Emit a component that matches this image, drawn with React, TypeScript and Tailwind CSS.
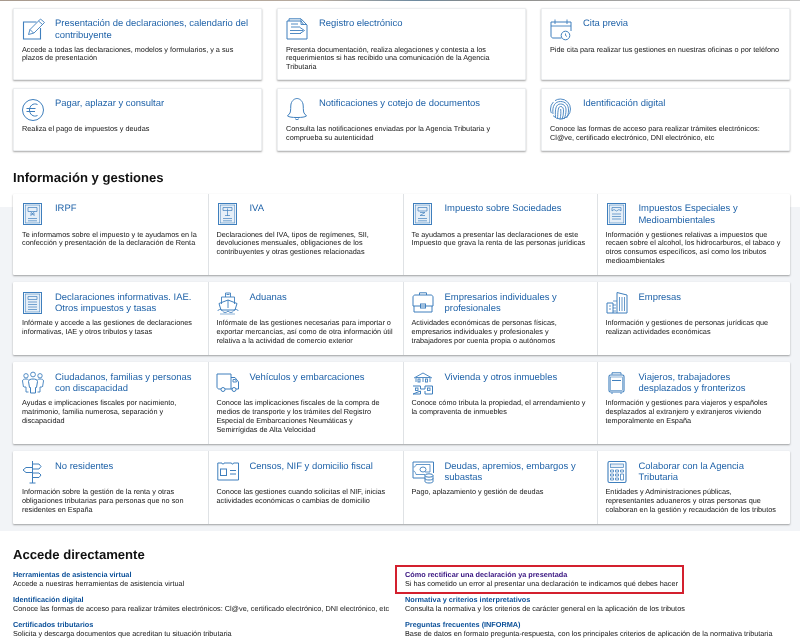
import React from "react";

const S = ({ children }: { children: React.ReactNode }) => (
  <svg width="24" height="24" viewBox="0 0 24 24" fill="none" stroke="#3f7fbd" strokeWidth="0.9" className="overflow-visible">
    {children}
  </svg>
);

const Form = ({ top }: { top: React.ReactNode }) => (
  <S>
    <rect x="1.5" y="0.5" width="18" height="21" strokeWidth="1" />
    <rect x="3.2" y="2" width="14.6" height="18" fill="#e6eff8" strokeWidth="0.6" />
    {top}
  </S>
);

const icons: Record<string, React.ReactNode> = {
  edit: (
    <S>
      <path d="M14.5 4H1.5V21H18.5V10" strokeWidth="1.1" />
      <path d="M6.5 16.5L8 11.5L18.5 1L22.5 4.5L12 15Z" />
      <path d="M16.5 3L20.5 6.5M8 11.5L11.5 15" />
    </S>
  ),
  docs: (
    <S>
      <path d="M3 3V0.8H15L21 7V21H1V3H15L18 7" strokeWidth="1" />
      <path d="M15 1V6.5H21" />
      <path d="M5 6H12M5 9H14M4 12.5H17M14 9.5L18.5 12.5L14 15.5M4 15.5H15M14.5 12.5" />
    </S>
  ),
  cal: (
    <S>
      <path d="M11.5 20H3C2 20 1 19 1 18V4H21V13" strokeWidth="1" />
      <path d="M1 8H21M5 1.5V6M17 1.5V6" />
      <circle cx="15.5" cy="17.5" r="4.3" strokeWidth="1" />
      <path d="M15.5 15.5V17.5L17 18.5" />
    </S>
  ),
  euro: (
    <S>
      <circle cx="11" cy="12" r="10.5" strokeWidth="1" />
      <path d="M15.5 6.5C11 4.5 7.5 8 7.5 12C7.5 16 11 19.5 15.5 17.5M4.5 10.5H13.5M4.5 13.5H13" strokeWidth="1" />
    </S>
  ),
  bell: (
    <S>
      <path d="M4 15C5 13 4.5 8 5 6C6 2 9 0.5 11 0.5C13 0.5 16 2 17 6C17.5 8 17 13 18 15L20.5 18C19 19 16 19.5 11 19.5C6 19.5 3 19 1.5 18Z" strokeWidth="1" />
      <path d="M9 20.5C10 22 12 22 13 20.5" />
    </S>
  ),
  finger: (
    <S>
      <circle cx="10.5" cy="11" r="10" strokeDasharray="24 3 12 2" />
      <path d="M3 16C2 8 5 3.5 10.5 3.5C15.5 3.5 18.5 7 18.5 12C18.5 15 18 18 16.5 20" />
      <path d="M5.5 19C5 12 5.5 6 10.5 6C14.5 6 16 9 16 12C16 15 15.5 18 14 21" />
      <path d="M7.5 20.5C8 16 7.5 8.5 10.5 8.5C13 8.5 13.5 10.5 13.5 13C13.5 16 13 19 12 21.5" />
      <path d="M10 21.5C11 17 11 14 10.7 11" />
    </S>
  ),
  irpf: <Form top={<path d="M6 4.5H15V8.5H6ZM8.5 8.5L12.5 13M12.5 8.5L8.5 13M8 11H13M6 15.5H15M6 17.8H15" strokeWidth="0.7" />} />,
  iva: <Form top={<path d="M6 4.5H15V7.5H6ZM10.5 5.5V13M8 12.5H13M6 15.5H15M6 17.8H15" strokeWidth="0.7" />} />,
  soc: <Form top={<path d="M6 4.5H15V8H6ZM8 9.5H13L8 12.5H13M6 15.5H15M6 17.8H15" strokeWidth="0.7" />} />,
  esp: <Form top={<path d="M6 4.5H15V8L13 6.5L10.5 8L8 6.5L6 8ZM6 11H15M6 13.5H15M6 16H15" strokeWidth="0.7" />} />,
  inf: <Form top={<path d="M6 4.5H15V7.5H6ZM6 10H15M6 12.5H15M6 15H15M6 17.5H15" strokeWidth="0.7" />} />,
  ship: (
    <S>
      <path d="M8.5 5V1H13.5V5M4.5 12V5H17.5V12" />
      <path d="M2 11.5L11 8L20 11.5L18 18H4Z" strokeWidth="1" />
      <path d="M11 8V16M9.5 2.5H12.5" />
      <path d="M0.5 19C2 17 4 17 5.5 19C7 21 9 21 11 19C13 21 15 21 16.5 19C18 17 20 17 21.5 19" />
      <path d="M3 22H18" strokeWidth="0.6" />
    </S>
  ),
  case: (
    <S>
      <path d="M7.5 3V0.8H14.5V3" strokeWidth="1" />
      <path d="M1 5C1 4 2 3 3 3H19C20 3 21 4 21 5V14H1Z" strokeWidth="1" />
      <path d="M2 14V20H20V14" strokeWidth="1" />
      <rect x="8.5" y="12" width="5" height="4" strokeWidth="1" />
    </S>
  ),
  build: (
    <S>
      <path d="M1 21V11H7V21M1 21H21V3L11 0.5V21" strokeWidth="1" />
      <path d="M7 9H11M3 14H5M3 17H5M13.5 5V19M16 5V19M18.5 5V19M7 13H10M7 16H10M7 19H10" strokeWidth="0.8" />
    </S>
  ),
  people: (
    <S>
      <circle cx="11" cy="2.5" r="2.4" />
      <circle cx="4" cy="3.8" r="2.2" />
      <circle cx="18" cy="3.8" r="2.2" />
      <path d="M1.5 15L0.5 9C0.5 7.5 2 7 4 7C5 7 6 7.2 6.5 7.8M20.5 15L21.5 9C21.5 7.5 20 7 18 7C17 7 16 7.2 15.5 7.8" />
      <path d="M6.5 9.5C6.5 7.5 9 7 11 7C13 7 15.5 7.5 15.5 9.5L14.5 15.5H13.5V21H8.5V15.5H7.5Z" strokeWidth="1" />
      <path d="M2 15H4V20H6.5M20 15H18V20H15.5" />
    </S>
  ),
  truck: (
    <S>
      <path d="M4 17H2C1 17 0 16 0 15V2H14V17H8M14 5.5H18L21.5 10V17H19M15.5 17H14" strokeWidth="1" />
      <path d="M16 7.5H18.5L19.5 10H16Z" />
      <circle cx="6" cy="17.5" r="2" strokeWidth="1" />
      <circle cx="17" cy="17.5" r="2" strokeWidth="1" />
    </S>
  ),
  house: (
    <S>
      <path d="M2 6L11 1L20 6M3.5 5.5H18.5M4 6V10M18 6V10M11 6V10" strokeWidth="0.9" />
      <rect x="6" y="7" width="2" height="3" />
      <rect x="13.5" y="7" width="2" height="3" />
      <path d="M1 14H8.5V17H13V14H20.5V22H13V19M8.5 19V22H1Z" strokeWidth="1" />
      <rect x="3.5" y="16" width="2.5" height="2.5" />
      <rect x="15.5" y="16" width="2.5" height="2.5" />
    </S>
  ),
  bag: (
    <S>
      <path d="M6 2.5V0.8H15V2.5" strokeWidth="1" />
      <rect x="3" y="3" width="15" height="17" rx="1.5" strokeWidth="1.1" />
      <rect x="4.5" y="5" width="12" height="13.5" strokeWidth="0.6" />
      <path d="M6 8.5H15M6 20.5V22M15 20.5V22" strokeWidth="1" />
    </S>
  ),
  sign: (
    <S>
      <path d="M10.5 0V22M7.5 22H13.5" strokeWidth="1" />
      <path d="M10.5 3H17L19 5.5L17 8H10.5M10.5 12H17L19 14L17 16.5H10.5M10.5 6.5H4L1 9L4 11.5H10.5" strokeWidth="1" />
    </S>
  ),
  cens: (
    <S>
      <path d="M0.8 2H5C5 3.5 7 3.5 7 2H14.5C14.5 3.5 16.5 3.5 16.5 2H21.5V19H0.8Z" strokeWidth="1" />
      <rect x="3.5" y="8" width="6" height="6.5" strokeWidth="1" />
      <path d="M13 9.5H19M13 13H19" strokeWidth="1" />
    </S>
  ),
  debt: (
    <S>
      <path d="M13 17H1V1H21.5V12" strokeWidth="1" />
      <path d="M4 3.5H18V11H13M4 3.5C4 5 3 6 1.5 6M1.5 10C3 10 3.5 12 4 13.5H13" strokeWidth="0.8" />
      <ellipse cx="11" cy="8.5" rx="3" ry="2.5" />
      <ellipse cx="17" cy="14.5" rx="4" ry="1.7" strokeWidth="1" />
      <path d="M13 14.5V20.5C13 22.5 21 22.5 21 20.5V14.5M13 17.5C13 19.5 21 19.5 21 17.5" strokeWidth="1" />
    </S>
  ),
  calc: (
    <S>
      <rect x="2" y="0.5" width="18" height="21" rx="1.5" strokeWidth="1.1" />
      <rect x="4.5" y="3" width="13" height="3.5" fill="#e6eff8" strokeWidth="0.7" />
      <path d="M4.5 9H7.5V11H4.5ZM9.5 9H12.5V11H9.5ZM14.5 9H17.5V11H14.5ZM4.5 13H7.5V15H4.5ZM9.5 13H12.5V15H9.5ZM14.5 13H17.5V19H14.5ZM4.5 17H7.5V19H4.5ZM9.5 17H12.5V19H9.5Z" strokeWidth="0.8" />
    </S>
  ),
};

type Item = { i: string; t: string; d: string };

const top: Item[] = [
  { i: "edit", t: "Presentación de declaraciones, calendario del contribuyente", d: "Accede a todas las declaraciones, modelos y formularios, y a sus plazos de presentación" },
  { i: "docs", t: "Registro electrónico", d: "Presenta documentación, realiza alegaciones y contesta a los requerimientos si has recibido una comunicación de la Agencia Tributaria" },
  { i: "cal", t: "Cita previa", d: "Pide cita para realizar tus gestiones en nuestras oficinas o por teléfono" },
  { i: "euro", t: "Pagar, aplazar y consultar", d: "Realiza el pago de impuestos y deudas" },
  { i: "bell", t: "Notificaciones y cotejo de documentos", d: "Consulta las notificaciones enviadas por la Agencia Tributaria y comprueba su autenticidad" },
  { i: "finger", t: "Identificación digital", d: "Conoce las formas de acceso para realizar trámites electrónicos: Cl@ve, certificado electrónico, DNI electrónico, etc" },
];

const rows: Item[][] = [
  [
    { i: "irpf", t: "IRPF", d: "Te informamos sobre el impuesto y te ayudamos en la confección y presentación de la declaración de Renta" },
    { i: "iva", t: "IVA", d: "Declaraciones del IVA, tipos de regímenes, SII, devoluciones mensuales, obligaciones de los contribuyentes y otras gestiones relacionadas" },
    { i: "soc", t: "Impuesto sobre Sociedades", d: "Te ayudamos a presentar las declaraciones de este Impuesto que grava la renta de las personas jurídicas" },
    { i: "esp", t: "Impuestos Especiales y Medioambientales", d: "Información y gestiones relativas a impuestos que recaen sobre el alcohol, los hidrocarburos, el tabaco y otros consumos específicos, así como los tributos medioambientales" },
  ],
  [
    { i: "inf", t: "Declaraciones informativas. IAE. Otros impuestos y tasas", d: "Infórmate y accede a las gestiones de declaraciones informativas, IAE y otros tributos y tasas" },
    { i: "ship", t: "Aduanas", d: "Infórmate de las gestiones necesarias para importar o exportar mercancías, así como de otra información útil relativa a la actividad de comercio exterior" },
    { i: "case", t: "Empresarios individuales y profesionales", d: "Actividades económicas de personas físicas, empresarios individuales y profesionales y trabajadores por cuenta propia o autónomos" },
    { i: "build", t: "Empresas", d: "Información y gestiones de personas jurídicas que realizan actividades económicas" },
  ],
  [
    { i: "people", t: "Ciudadanos, familias y personas con discapacidad", d: "Ayudas e implicaciones fiscales por nacimiento, matrimonio, familia numerosa, separación y discapacidad" },
    { i: "truck", t: "Vehículos y embarcaciones", d: "Conoce las implicaciones fiscales de la compra de medios de transporte y los trámites del Registro Especial de Embarcaciones Neumáticas y Semirrígidas de Alta Velocidad" },
    { i: "house", t: "Vivienda y otros inmuebles", d: "Conoce cómo tributa la propiedad, el arrendamiento y la compraventa de inmuebles" },
    { i: "bag", t: "Viajeros, trabajadores desplazados y fronterizos", d: "Información y gestiones para viajeros y españoles desplazados al extranjero y extranjeros viviendo temporalmente en España" },
  ],
  [
    { i: "sign", t: "No residentes", d: "Información sobre la gestión de la renta y otras obligaciones tributarias para personas que no son residentes en España" },
    { i: "cens", t: "Censos, NIF y domicilio fiscal", d: "Conoce las gestiones cuando solicitas el NIF, inicias actividades económicas o cambias de domicilio" },
    { i: "debt", t: "Deudas, apremios, embargos y subastas", d: "Pago, aplazamiento y gestión de deudas" },
    { i: "calc", t: "Colaborar con la Agencia Tributaria", d: "Entidades y Administraciones públicas,\nrepresentantes aduaneros y otras personas que colaboran en la gestión y recaudación de los tributos" },
  ],
];

const Body = ({ it }: { it: Item }) => (
  <>
    <div className="flex min-h-[27px] mb-[0.5px]">
      <div className="w-[33px] shrink-0">{icons[it.i]}</div>
      <h3 className="text-[9.45px] leading-[11.5px] font-normal text-[#1f62a8] pb-[3.5px]">{it.t}</h3>
    </div>
    <p className="text-[7.3px] leading-[8.7px] text-[#161616] whitespace-pre-line">{it.d}</p>
  </>
);

const L = ({ t, d, visited }: { t: string; d: string; visited?: boolean }) => (
  <div className="h-[25px] pt-[5px] relative">
    <div className={`text-[7.3px] leading-[8.7px] font-bold ${visited ? "text-[#35107f]" : "text-[#0a4f98]"}`}>{t}</div>
    <div className="text-[7.3px] leading-[8.7px] text-[#161616]">{d}</div>
    {visited && <div className="absolute left-[-10px] w-[289px] top-[-1px] h-[29px] border-2 border-[#d3202e]" />}
  </div>
);

export default function App() {
  return (
    <div className="w-[800px] h-[644px] overflow-hidden bg-white font-['Liberation_Sans',Arial,sans-serif] [text-rendering:geometricPrecision] blur-[0.2px]">
      <div className="h-px bg-[linear-gradient(90deg,#a89a8e_0%,#b8aca0_40%,#6d8aa0_52%,#8a8a88_60%,#c4c4c4_100%)]" />
      <section className="pl-[13px] pr-[10px] pt-[7px] grid grid-cols-3 gap-x-[15px] gap-y-[8px]">
        {top.map((it) => (
          <div key={it.t} className="bg-white border border-[#eceef0] shadow-[0_1px_2px_rgba(0,0,0,0.35)] rounded-[1px] pt-[9px] pl-[8px] pr-[8px] pb-[7px]">
            <Body it={it} />
          </div>
        ))}
      </section>
      <h2 className="px-[13px] mt-[18px] text-[13.1px] leading-[17px] font-bold text-[#111]">Información y gestiones</h2>
      <section className="bg-[linear-gradient(180deg,#ffffff_20.5px,#f2f4f7_20.5px)] pl-[13px] pr-[10px] pt-[8px] pb-[7px] flex flex-col gap-[7.5px]">
        {rows.map((r, ri) => (
          <div key={ri} className="grid grid-cols-[194.5px_195px_194px_1fr] bg-white shadow-[0_1px_2px_rgba(0,0,0,0.35)] rounded-[1px]">
            {r.map((it, i) => (
              <div key={it.t} className={`pt-[9.5px] pr-[8px] pb-[9.5px] ${i ? "pl-[8px] border-l border-[#dfe2e5]" : "pl-[9px]"}`}>
                <Body it={it} />
              </div>
            ))}
          </div>
        ))}
      </section>
      <h2 className="px-[13px] mt-[15px] text-[13.1px] leading-[17px] font-bold text-[#111]">Accede directamente</h2>
      <section className="px-[13px] pt-[3px] grid grid-cols-[392px_1fr]">
        <div>
          <L t="Herramientas de asistencia virtual" d="Accede a nuestras herramientas de asistencia virtual" />
          <L t="Identificación digital" d="Conoce las formas de acceso para realizar trámites electrónicos: Cl@ve, certificado electrónico, DNI electrónico, etc" />
          <L t="Certificados tributarios" d="Solicita y descarga documentos que acreditan tu situación tributaria" />
        </div>
        <div>
          <L visited t="Cómo rectificar una declaración ya presentada" d="Si has cometido un error al presentar una declaración te indicamos qué debes hacer" />
          <L t="Normativa y criterios interpretativos" d="Consulta la normativa y los criterios de carácter general en la aplicación de los tributos" />
          <L t="Preguntas frecuentes (INFORMA)" d="Base de datos en formato pregunta-respuesta, con los principales criterios de aplicación de la normativa tributaria" />
        </div>
      </section>
    </div>
  );
}
